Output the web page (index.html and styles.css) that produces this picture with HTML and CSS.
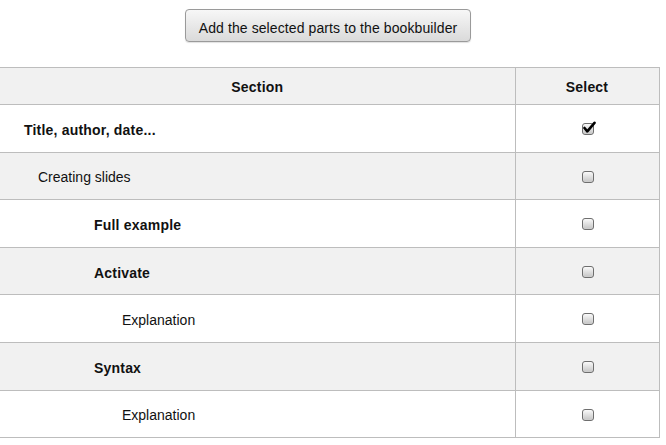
FILE: index.html
```html
<!DOCTYPE html>
<html>
<head>
<meta charset="utf-8">
<link rel="stylesheet" href="styles.css">
</head>
<body>
<div class="page">
  <div class="actions">
    <button class="btn" type="button">Add the selected parts to the bookbuilder</button>
  </div>
  <table class="parts">
    <thead>
      <tr><th class="col-section">Section</th><th class="col-select">Select</th></tr>
    </thead>
    <tbody>
      <tr class="odd"><td class="name lvl0 bold">Title, author, date...</td><td class="sel"><span class="cb checked"><svg width="15" height="14" viewBox="0 0 15 14"><path d="M2.5 7 L5.3 10.3 L12.5 1.8" fill="none" stroke="#000" stroke-width="2.6" stroke-linecap="round" stroke-linejoin="round"/></svg></span></td></tr>
      <tr class="even"><td class="name lvl1">Creating slides</td><td class="sel"><span class="cb"></span></td></tr>
      <tr class="odd"><td class="name lvl2 bold">Full example</td><td class="sel"><span class="cb"></span></td></tr>
      <tr class="even"><td class="name lvl2 bold">Activate</td><td class="sel"><span class="cb"></span></td></tr>
      <tr class="odd"><td class="name lvl3">Explanation</td><td class="sel"><span class="cb"></span></td></tr>
      <tr class="even"><td class="name lvl2 bold">Syntax</td><td class="sel"><span class="cb"></span></td></tr>
      <tr class="odd"><td class="name lvl3">Explanation</td><td class="sel"><span class="cb"></span></td></tr>
    </tbody>
  </table>
</div>
</body>
</html>
```
FILE: styles.css
```css
* { box-sizing: border-box; }
html, body { margin: 0; padding: 0; background: #fff; }
body {
  font-family: "Liberation Sans", Arial, sans-serif;
  font-size: 14px;
  color: #111;
}
.page { width: 659px; }
.actions {
  display: flex;
  justify-content: center;
  padding: 9px 0 0 0;
  height: 67px;
}
.btn {
  width: 286px;
  height: 33px;
  font-family: "Liberation Sans", Arial, sans-serif;
  font-size: 14px;
  letter-spacing: 0.1px;
  color: #111;
  border: 1px solid #9a9a9a;
  border-radius: 4px;
  background: linear-gradient(#f7f7f7, #dadada);
  box-shadow: 0 1px 1px rgba(0,0,0,0.12);
  padding: 4px 0 0 0;
  margin-left: -3px;
}
.parts {
  width: 659px;
  border-collapse: collapse;
  table-layout: fixed;
}
.parts th, .parts td {
  border-top: 1px solid #bdbdbd;
  border-bottom: 1px solid #bdbdbd;
  padding: 0;
}
.col-section { width: 515px; }
.col-select { width: 144px; }
.parts th {
  height: 37px;
  font-weight: bold;
  letter-spacing: 0.2px;
  text-align: center;
  background: #f1f1f1;
  padding-top: 2px;
}
.parts th + th, .parts td + td {
  border-left: 1px solid #bdbdbd;
  border-right: 1px solid #bdbdbd;
}
.parts td { height: 47.6px; padding-top: 3px; }
.odd { background: #fff; }
.even { background: #f1f1f1; }
.bold { font-weight: bold; letter-spacing: 0.2px; }
.lvl0 { padding-left: 24px !important; }
.lvl1 { padding-left: 38px !important; }
.lvl2 { padding-left: 94px !important; }
.lvl3 { padding-left: 122px !important; }
.parts td.sel { text-align: center; padding-top: 0; }
.cb {
  display: inline-block;
  position: relative;
  width: 12px;
  height: 12px;
  border: 1px solid #6e6e6e;
  border-radius: 3px;
  background: linear-gradient(#fafafa, #c4c4c4);
  box-shadow: inset 0 0 1px #fff;
  vertical-align: middle;
  margin-top: -1px;
  margin-left: 1px;
}
.cb svg {
  position: absolute;
  left: -1px;
  top: -3px;
}
```
